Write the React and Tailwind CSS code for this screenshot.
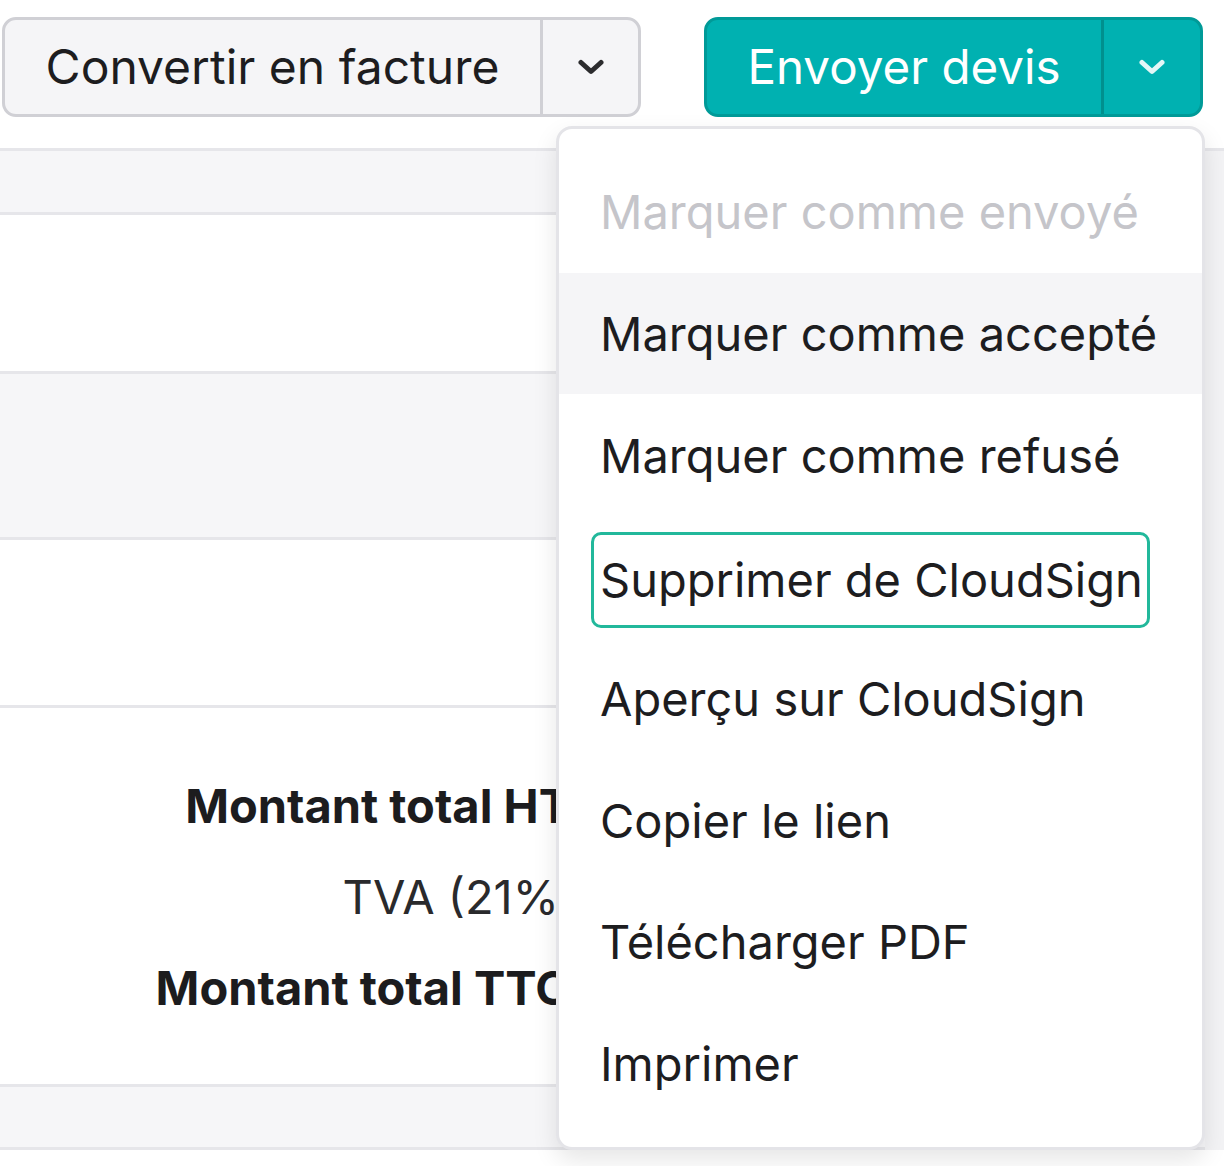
import React from "react";

function Chevron({ className }) {
  return (
    <svg viewBox="0 0 26 16" className={className} fill="none">
      <path d="M3 3.5 L13 12.5 L23 3.5" stroke="currentColor" strokeWidth="5" strokeLinecap="round" strokeLinejoin="round" />
    </svg>
  );
}

const items = [
  { label: "Marquer comme envoyé", disabled: true },
  { label: "Marquer comme accepté", active: true },
  { label: "Marquer comme refusé" },
  { label: "Supprimer de CloudSign", focused: true },
  { label: "Aperçu sur CloudSign" },
  { label: "Copier le lien" },
  { label: "Télécharger PDF" },
  { label: "Imprimer" },
];

export default function App() {
  return (
    <div className="relative w-[1224px] h-[1166px] overflow-hidden bg-white font-['Inter',sans-serif] text-[#1d1d1f]">
      {/* Header buttons */}
      <div className="flex pl-[2px] pt-[17px] gap-[63px]">
        <div className="flex h-[100px] w-[639px] rounded-[14px] border-[3px] border-[#d0d0d5] bg-[#f5f5f7]">
          <div className="flex flex-1 items-center justify-center text-[48px] leading-none">
            Convertir en facture
          </div>
          <div className="flex w-[98px] items-center justify-center border-l-[3px] border-[#d0d0d5] text-[#2c2c2e]">
            <Chevron className="w-[26px] h-[16px]" />
          </div>
        </div>
        <div className="flex h-[100px] w-[499px] rounded-[14px] border-[3px] border-[#009a98] bg-[#00b1b1] text-white">
          <div className="flex flex-1 items-center justify-center text-[47.5px] leading-none">
            Envoyer devis
          </div>
          <div className="flex w-[99px] items-center justify-center border-l-[3px] border-[#00908e] text-[#e3f7f7]">
            <Chevron className="w-[26px] h-[16px]" />
          </div>
        </div>
      </div>

      {/* Background table */}
      <div className="mt-[31px] flex border-t-[3px] border-[#e6e6ea]">
        <div className="flex-1">
          <div className="h-[64px] border-b-[3px] border-[#e6e6ea] bg-[#f6f6f8]" />
          <div className="h-[159px] border-b-[3px] border-[#e6e6ea] bg-white" />
          <div className="h-[166px] border-b-[3px] border-[#e6e6ea] bg-[#f6f6f8]" />
          <div className="h-[168px] border-b-[3px] border-[#e6e6ea] bg-white" />
          <div className="h-[379px] border-b-[3px] border-[#e6e6ea] bg-white py-[52px]">
            <div className="flex w-[570px] flex-col items-end text-[47px] leading-[91px] whitespace-nowrap">
              <div className="font-bold text-[#1c1c1e]">Montant total HT</div>
              <div className="-mr-[6px] text-[#2a2a2c]">TVA (21%)</div>
              <div className="font-bold text-[#1c1c1e]">Montant total TTC</div>
            </div>
          </div>
          <div className="h-[63px] border-b-[3px] border-[#e6e6ea] bg-[#f6f6f8]" />
        </div>
        <div className="w-[19px] bg-[#f3f3f5]" />
      </div>

      {/* Dropdown menu */}
      <div className="absolute left-[556px] top-[126px] w-[649px] rounded-[16px] border-[3px] border-[#e4e4e8] bg-white pt-[22px] pb-[22px] shadow-[0_10px_24px_rgba(0,0,0,0.10)]">
        {items.map((it) => (
          <div
            key={it.label}
            className={
              "flex h-[121.7px] items-center pl-[41px] text-[47px] leading-none whitespace-nowrap " +
              (it.active ? "bg-[#f5f5f7] " : "") +
              (it.disabled ? "text-[#c5c5ca]" : "text-[#1d1d1f]")
            }
          >
            {it.focused ? (
              <span className="-ml-[9px] mt-[6px] flex h-[96px] items-center rounded-[10px] border-[3px] border-[#22b89b] pl-[6px] pr-[4px]">
                {it.label}
              </span>
            ) : (
              it.label
            )}
          </div>
        ))}
      </div>
    </div>
  );
}
